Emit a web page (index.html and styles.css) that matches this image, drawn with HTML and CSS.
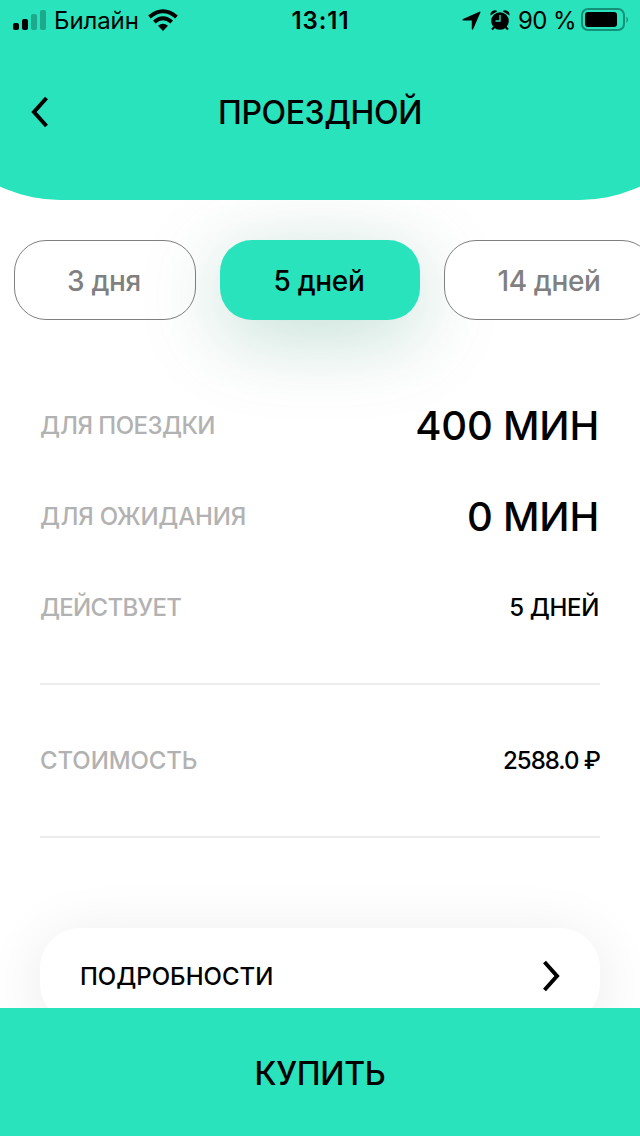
FILE: index.html
```html
<!DOCTYPE html>
<html lang="ru">
<head>
<meta charset="utf-8">
<title>Проездной</title>
<link rel="stylesheet" href="styles.css">
</head>
<body>
<div class="screen">
  <header class="header">
    <div class="status">
      <div class="status-left">
        <svg class="signal" width="34" height="22" viewBox="0 0 34 22"><rect x="0" y="14" width="6" height="7" rx="2"/><rect x="9" y="10" width="6" height="11" rx="2"/><g opacity=".25"><rect x="18" y="5" width="6" height="16" rx="2"/><rect x="27" y="1" width="6" height="20" rx="2"/></g></svg>
        <span class="carrier">Билайн</span>
        <svg class="wifi" width="30" height="22" viewBox="0 0 30 22"><g fill="none" stroke="#000" stroke-width="4"><path d="M1.500 8Q15-3.500 28.500 8"/><path d="M6.300 13Q15 5.500 23.700 13"/></g><path d="M15 22l-5-5.200q5-4 10 0z"/></svg>
      </div>
      <span class="clock">13:11</span>
      <div class="status-right">
        <svg class="location" width="19" height="19" viewBox="0 0 19 19"><path d="M18 .5q.8 0 .4 1l-7.200 16.600q-1 1.400-1.400 0V9.600H1.200Q-.3 9 1 8z"/></svg>
        <svg class="alarm" width="20" height="22" viewBox="0 0 20 22"><circle cx="10" cy="12" r="8.800"/><path d="M.5 6.500Q0 2 4.500 1.200q2 0 2.800 1zM19.500 6.500Q20 2 15.500 1.200q-2 0-2.800 1z"/><path d="M4.500 18L2 20.500M15.500 18l2.500 2.500" stroke="#000" stroke-width="2"/><path d="M10 6v6H5.500" fill="none" stroke="#28e3bb" stroke-width="1.300"/></svg>
        <span class="percent">90 %</span>
        <svg class="battery" width="49" height="24" viewBox="0 0 49 24"><rect x="1" y="1" width="42" height="21" rx="6" fill="none" stroke="#149078" stroke-width="2"/><rect x="4" y="4" width="32" height="15" rx="3"/><path d="M45.500 8.500q3 3.200 0 6.500z" fill="#149078"/></svg>
      </div>
    </div>
    <div class="nav">
      <svg class="back" width="18" height="32" viewBox="0 0 18 32"><path d="M15.500 2L3 16l12.500 14" fill="none" stroke="#000" stroke-width="4"/></svg>
      <h1 class="title">ПРОЕЗДНОЙ</h1>
    </div>
  </header>
  <div class="chips">
    <div class="chip chip-short">3 дня</div>
    <div class="chip chip-active">5 дней</div>
    <div class="chip chip-long">14 дней</div>
  </div>
  <main class="details">
    <div class="row"><span class="label trip">ДЛЯ ПОЕЗДКИ</span><span class="value value-large">400 МИН</span></div>
    <div class="row"><span class="label waiting">ДЛЯ ОЖИДАНИЯ</span><span class="value value-large">0 МИН</span></div>
    <div class="row"><span class="label valid">ДЕЙСТВУЕТ</span><span class="value days">5 ДНЕЙ</span></div>
    <div class="row row-price"><span class="label cost">СТОИМОСТЬ</span><span class="value price">2588.0 ₽</span></div>
    <div class="more">
      <span class="more-text">ПОДРОБНОСТИ</span>
      <svg width="18" height="32" viewBox="0 0 18 32"><path d="M2.500 2L15 16 2.500 30" fill="none" stroke="#000" stroke-width="4"/></svg>
    </div>
  </main>
  <footer class="buy"><span>КУПИТЬ</span></footer>
</div>
</body>
</html>
```
FILE: styles.css
```css
* { box-sizing: border-box; }
body { margin: 0; background: #fff; color: #000; font-family: Inter, "Liberation Sans", sans-serif; font-weight: 500; }
.screen { width: 640px; height: 1136px; overflow: hidden; display: flex; flex-direction: column; white-space: nowrap; }
svg { display: block; flex: none; }
.header { position: relative; z-index: 0; height: 200px; flex: none; }
.header::before { content: ""; position: absolute; z-index: -1; inset: 0 -80px; background: #28e3bb; border-radius: 0 0 140px 140px; }
.status { height: 40px; display: grid; grid-template-columns: 1fr auto 1fr; align-items: center; padding: 0 10px 0 13px; }
.status-left, .status-right { display: flex; align-items: center; }
.status-right { justify-content: flex-end; }
.carrier { margin: 0 9px 0 7px; font-size: 24px; font-weight: 400; letter-spacing: -.1px; }
.clock { margin-right: 2px; font-size: 24px; font-weight: 600; letter-spacing: .9px; }
.location { margin-right: 9px; }
.percent { margin: 0 5px 0 8px; font-size: 24px; font-weight: 400; letter-spacing: -.6px; }
.nav { height: 146px; display: grid; grid-template-columns: 50px 1fr 50px; align-items: center; }
.back { margin: 0 0 2px 31px; }
.title { margin: 0; text-align: center; font-size: 32px; font-weight: 500; line-height: 40px; letter-spacing: -.4px; }
.chips { display: flex; gap: 24px; padding: 40px 0 0 14px; flex: none; }
.chip { width: 200px; height: 80px; flex: none; display: flex; align-items: center; justify-content: center; border: 1px solid #808080; border-radius: 32px; background: #fff; color: #808080; font-size: 28px; padding: 2px 2px 0 0; letter-spacing: -.35px; }
.chip-short { width: 182px; }
.chip-long { width: 210px; padding-right: 0; }
.chip-active { border: 0; background: #28e3bb; color: #000; box-shadow: 0 16px 80px rgba(0, 120, 85, .25); }
.details { flex: none; height: 688px; padding: 60px 40px 0; }
.row { height: 91px; display: flex; align-items: center; justify-content: space-between; }
.label { color: #b2b2b2; font-size: 24px; }
.trip { letter-spacing: -.55px; }
.waiting { letter-spacing: -.2px; }
.valid { letter-spacing: -.7px; }
.cost { letter-spacing: -.1px; }
.value { font-size: 24px; }
.value-large { font-size: 40px; letter-spacing: -.2px; padding-right: 1px; }
.days { letter-spacing: -.35px; padding-right: 1px; }
.price { letter-spacing: -1px; }
.row-price { height: 155px; margin-top: 30px; border: solid #ececec; border-width: 2px 0; }
.more { margin-top: 90px; height: 96px; padding: 0 40px 0 40px; display: flex; align-items: center; justify-content: space-between; border-radius: 40px; background: #fff; box-shadow: 0 8px 60px rgba(0, 0, 0, .09); font-size: 24px; }
.buy { position: relative; flex: none; height: 128px; padding-top: 2px; display: flex; align-items: center; justify-content: center; background: #28e3bb; font-size: 32px; letter-spacing: -.3px; }
```
